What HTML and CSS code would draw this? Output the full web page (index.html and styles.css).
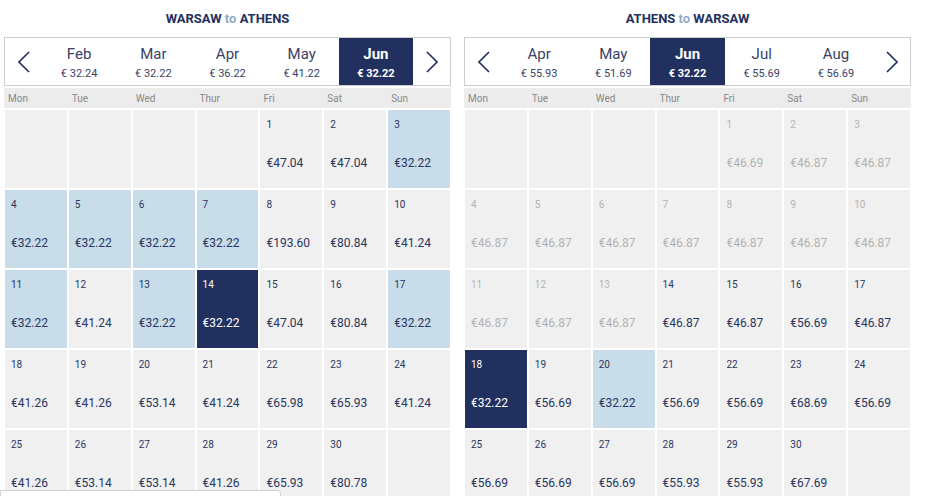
FILE: index.html
```html
<!DOCTYPE html>
<html lang="en">
<head>
  <meta charset="UTF-8">
  <title>Flight fares calendar</title>
  <link rel="stylesheet" href="styles.css">
</head>
<body>

  <div class="calendars">
    <div class="panel" id="outbound">
      <h3 class="route">WARSAW <span>to</span> ATHENS</h3>
      <div class="months">
        <button class="arrow">
          <svg width="12" height="22" viewBox="0 0 12 22"><path d="M11 1 1 11l10 10" fill="none" stroke="#22305f" stroke-width="1.6"/></svg>
        </button>
        <div class="month"><b>Feb</b><small>€ 32.24</small></div>
        <div class="month"><b>Mar</b><small>€ 32.22</small></div>
        <div class="month"><b>Apr</b><small>€ 36.22</small></div>
        <div class="month"><b>May</b><small>€ 41.22</small></div>
        <div class="month active"><b>Jun</b><small>€ 32.22</small></div>
        <button class="arrow">
          <svg width="12" height="22" viewBox="0 0 12 22"><path d="M1 1l10 10L1 21" fill="none" stroke="#22305f" stroke-width="1.6"/></svg>
        </button>
      </div>
      <div class="weekdays">
        <span>Mon</span><span>Tue</span><span>Wed</span><span>Thur</span><span>Fri</span><span>Sat</span><span>Sun</span>
      </div>
      <div class="days"></div>
    </div>

    <div class="panel" id="inbound">
      <h3 class="route">ATHENS <span>to</span> WARSAW</h3>
      <div class="months">
        <button class="arrow">
          <svg width="12" height="22" viewBox="0 0 12 22"><path d="M11 1 1 11l10 10" fill="none" stroke="#22305f" stroke-width="1.6"/></svg>
        </button>
        <div class="month"><b>Apr</b><small>€ 55.93</small></div>
        <div class="month"><b>May</b><small>€ 51.69</small></div>
        <div class="month active"><b>Jun</b><small>€ 32.22</small></div>
        <div class="month"><b>Jul</b><small>€ 55.69</small></div>
        <div class="month"><b>Aug</b><small>€ 56.69</small></div>
        <button class="arrow">
          <svg width="12" height="22" viewBox="0 0 12 22"><path d="M1 1l10 10L1 21" fill="none" stroke="#22305f" stroke-width="1.6"/></svg>
        </button>
      </div>
      <div class="weekdays">
        <span>Mon</span><span>Tue</span><span>Wed</span><span>Thur</span><span>Fri</span><span>Sat</span><span>Sun</span>
      </div>
      <div class="days"></div>
    </div>
  </div>

  <div class="status"></div>

  <script>
    // price per day of June, d = disabled, c = cheapest, s = selected
    const outbound = [
      "47.04", "47.04", "32.22 c",
      "32.22 c", "32.22 c", "32.22 c", "32.22 c", "193.60", "80.84", "41.24",
      "32.22 c", "41.24", "32.22 c", "32.22 s", "47.04", "80.84", "32.22 c",
      "41.26", "41.26", "53.14", "41.24", "65.98", "65.93", "41.24",
      "41.26", "53.14", "53.14", "41.26", "65.93", "80.78"
    ];
    const inbound = [
      "46.69 d", "46.87 d", "46.87 d",
      "46.87 d", "46.87 d", "46.87 d", "46.87 d", "46.87 d", "46.87 d", "46.87 d",
      "46.87 d", "46.87 d", "46.87 d", "46.87", "46.87", "56.69", "46.87",
      "32.22 s", "56.69", "32.22 c", "56.69", "56.69", "68.69", "56.69",
      "56.69", "56.69", "56.69", "55.93", "55.93", "67.69"
    ];

    function fillMonth(id, prices) {
      const grid = document.querySelector("#" + id + " .days");
      const flags = { d: "off", c: "cheap", s: "picked" };
      // June starts on a Friday
      for (let i = 0; i < 4; i++) grid.innerHTML += '<div class="day"></div>';
      prices.forEach((p, i) => {
        const [price, flag] = p.split(" ");
        grid.innerHTML += '<div class="day ' + (flags[flag] || "") + '">' +
          '<span class="num">' + (i + 1) + '</span>' +
          '<span class="price">€' + price + '</span></div>';
      });
      grid.innerHTML += '<div class="day"></div>';
    }

    fillMonth("outbound", outbound);
    fillMonth("inbound", inbound);
  </script>
</body>
</html>
```

FILE: styles.css
```css
* {
  margin: 0;
  padding: 0;
  box-sizing: border-box;
}

body {
  font-family: Roboto, "Liberation Sans", sans-serif;
  background: #fff;
  color: #22305f;
  overflow: hidden;
  height: 496px;
}

.calendars {
  display: flex;
  gap: 13px;
  padding-left: 4px;
}

.panel {
  width: 447px;
}

.route {
  height: 37px;
  padding-top: 11px;
  text-align: center;
  font-size: 13px;
  font-weight: bold;
  color: #22305f;
}

.route span {
  color: #93abc7;
}

.months {
  display: flex;
  height: 49px;
  border: 1px solid #cdcdcd;
}

.arrow {
  width: 37px;
  border: none;
  background: #fff;
  display: flex;
  align-items: center;
  justify-content: center;
}

.month {
  flex: 1;
  display: flex;
  flex-direction: column;
  align-items: center;
  padding-top: 7px;
  color: #3a4266;
}

.month b {
  font-size: 15px;
  font-weight: normal;
  line-height: 18px;
}

.month small {
  font-size: 11px;
  line-height: 14px;
  margin-top: 4px;
}

.month.active {
  background: #21305f;
  color: #fff;
}

.month.active b,
.month.active small {
  font-weight: bold;
}

.weekdays {
  display: grid;
  grid-template-columns: repeat(7, 1fr);
  gap: 2px;
  height: 20px;
  margin-top: 2px;
  padding: 1px 1px 0;
  background: #ececec;
  font-size: 10px;
  color: #888;
  align-items: center;
}

.weekdays span {
  padding-left: 3px;
}

.days {
  display: grid;
  grid-template-columns: repeat(7, 1fr);
  grid-auto-rows: 78px;
  gap: 2px;
  padding: 2px 1px 0;
}

.day {
  background: #f0f0f0;
  display: flex;
  flex-direction: column;
  padding: 8px 5px 0 6px;
  color: #2a365f;
}

.num {
  font-size: 10px;
  line-height: 13px;
}

.price {
  font-size: 12px;
  line-height: 15px;
  margin-top: 25px;
}

.day.cheap {
  background: #c8dcea;
}

.day.picked {
  background: #21305f;
  color: #fff;
}

.day.off {
  color: #b3b3b3;
}

.status {
  position: absolute;
  left: 0;
  top: 490px;
  width: 281px;
  height: 12px;
  background: #fff;
  border: 1px solid #d2d2d2;
  border-radius: 0 3px 0 0;
}
```
